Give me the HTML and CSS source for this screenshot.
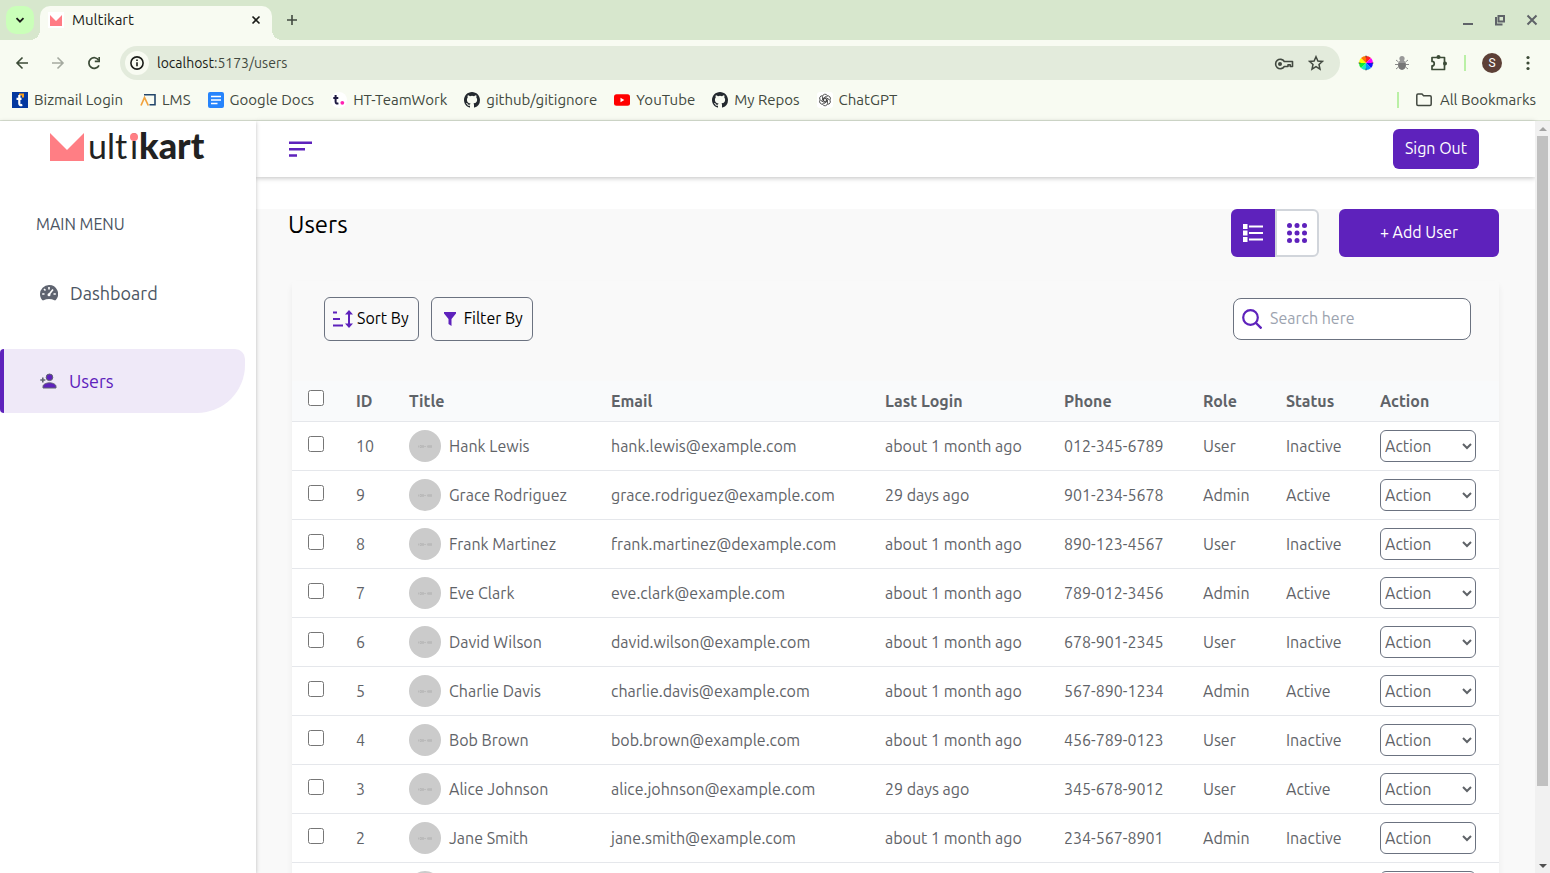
FILE: index.html
```html
<!DOCTYPE html>
<html lang="en">
<head>
<meta charset="utf-8">
<title>Multikart</title>
<link rel="stylesheet" href="styles.css">
</head>
<body>
<svg class="defs" aria-hidden="true">
  <symbol id="github" viewBox="0 0 16 16"><path fill="#24292f" d="M8 0C3.58 0 0 3.58 0 8c0 3.54 2.29 6.53 5.47 7.59.4.07.55-.17.55-.38 0-.19-.01-.82-.01-1.49-2.01.37-2.53-.49-2.69-.94-.09-.23-.48-.94-.82-1.13-.28-.15-.68-.52-.01-.53.63-.01 1.08.58 1.23.82.72 1.21 1.87.87 2.33.66.07-.52.28-.87.51-1.07-1.78-.2-3.64-.89-3.64-3.95 0-.87.31-1.59.82-2.15-.08-.2-.36-1.02.08-2.12 0 0 .67-.21 2.2.82a7.6 7.6 0 0 1 4 0c1.53-1.04 2.2-.82 2.2-.82.44 1.1.16 1.92.08 2.12.51.56.82 1.27.82 2.15 0 3.07-1.87 3.75-3.65 3.95.29.25.54.73.54 1.48 0 1.07-.01 1.93-.01 2.2 0 .21.15.46.55.38A8 8 0 0 0 16 8c0-4.42-3.58-8-8-8z"/></symbol>
  <symbol id="avatar" viewBox="0 0 32 32"><circle cx="16" cy="16" r="16" fill="#cbcbcb"/><path d="M9.500 15.500v2M11 15.500h1.500v2H11zM13.500 15.500h1v2h-1zM15.500 16l1 1M16.500 16l-1 1M18.500 15.500v2M19.500 15.500h1v2h-1zM21.500 15.500h1v2h-1z" fill="none" stroke="#a9a9a9" stroke-width=".5"/></symbol>
</svg>

<div class="browser">
  <div class="tabstrip">
    <button class="tab-search" aria-label="Search tabs"><svg width="12" height="12" viewBox="0 0 12 12"><path d="M2.500 4.200 6 7.700l3.500-3.500" fill="none" stroke="#1a1c18" stroke-width="1.800"/></svg></button>
    <div class="tab">
      <svg width="16" height="16" viewBox="0 0 16 16"><path fill="#fff" d="M0 0h16v16H0z"/><path fill="#ff7b84" d="M2 3l6 6 6-6v11H2z"/></svg>
      <span class="tab-title">Multikart</span>
      <button class="plain" aria-label="Close tab"><svg width="10" height="10" viewBox="0 0 10 10"><path d="M1.500 1.500l7 7m0-7l-7 7" stroke="#1a1c18" stroke-width="1.600"/></svg></button>
    </div>
    <button class="plain new-tab" aria-label="New tab"><svg width="12" height="12" viewBox="0 0 12 12"><path d="M6 1v10M1 6h10" stroke="#424940" stroke-width="1.600"/></svg></button>
    <div class="window-buttons">
      <button class="plain" aria-label="Minimize"><svg width="12" height="12" viewBox="0 0 12 12"><path d="M1 10h10" stroke="#5f6368" stroke-width="2"/></svg></button>
      <button class="plain" aria-label="Restore"><svg width="12" height="12" viewBox="0 0 12 12"><path d="M4.500 2h5.500v5.500H4.500zM2 3v7.500h6.500" fill="none" stroke="#5f6368" stroke-width="2"/></svg></button>
      <button class="plain" aria-label="Close"><svg width="12" height="12" viewBox="0 0 12 12"><path d="M1.500 1.500l9 9m0-9l-9 9" stroke="#5f6368" stroke-width="2"/></svg></button>
    </div>
  </div>
  <div class="toolbar">
    <div class="nav-buttons">
      <button class="plain" aria-label="Back"><svg width="14" height="14" viewBox="0 0 14 14"><path d="M13 7H2m5.500-5.500L2 7l5.500 5.500" fill="none" stroke="#3c4b37" stroke-width="1.600"/></svg></button>
      <button class="plain" aria-label="Forward"><svg width="14" height="14" viewBox="0 0 14 14"><path d="M1 7h11M6.500 1.500 12 7l-5.500 5.500" fill="none" stroke="#a5aaa0" stroke-width="1.600"/></svg></button>
      <button class="plain" aria-label="Reload"><svg width="14" height="14" viewBox="0 0 14 14"><path d="M12 9.300A5.300 5.300 0 1 1 11.700 4.200" fill="none" stroke="#3c4b37" stroke-width="1.700"/><path d="M13 1v5.200H7.800V4.600h3.600V1z" fill="#3c4b37"/></svg></button>
    </div>
    <div class="omnibox">
      <button class="site-info" aria-label="Site information"><svg width="14" height="14" viewBox="0 0 14 14"><circle cx="7" cy="7" r="6.100" fill="none" stroke="#1a1c18" stroke-width="1.600"/><path d="M7 6.200v4M7 3.500v1.600" stroke="#1a1c18" stroke-width="1.600"/></svg></button>
      <span class="url"><b>localhost</b>:5173/users</span>
      <button class="plain" aria-label="Passwords"><svg width="20" height="14" viewBox="0 0 20 14"><path d="M10.300 5.500H18.500v5h-2.300V8.800h-2.200v1.700H10.300A4.700 4.700 0 1 1 10.300 5.500z" fill="none" stroke="#424940" stroke-width="1.600" stroke-linejoin="round"/><circle cx="6" cy="8" r="2" fill="#424940"/></svg></button>
      <button class="plain" aria-label="Bookmark this page"><svg width="16" height="16" viewBox="0 0 16 16"><path d="M8 1.700l1.900 4.300 4.600.4-3.500 3.100 1 4.600L8 11.700l-4 2.400 1-4.600-3.500-3.100L6.100 6z" fill="none" stroke="#424940" stroke-width="1.500"/></svg></button>
    </div>
    <div class="extensions">
      <button class="plain" aria-label="Color picker"><svg width="16" height="16" viewBox="0 0 16 16"><path fill="#f22" d="M8 8V1a7 7 0 0 1 5 2z"/><path fill="#f0f" d="M8 8l5-5a7 7 0 0 1 2 5z"/><path fill="#11f" d="M8 8h7a7 7 0 0 1-2 5z"/><path fill="#09f" d="M8 8l5 5a7 7 0 0 1-5 2z"/><path fill="#1de9c0" d="M8 8v7a7 7 0 0 1-5-2z"/><path fill="#1e3" d="M8 8l-5 5a7 7 0 0 1-2-5z"/><path fill="#ff0" d="M8 8H1a7 7 0 0 1 2-5z"/><path fill="#f70" d="M8 8L3 3a7 7 0 0 1 5-2z"/><path d="M8 .5v2M8 13.500v2M.5 8h2M13.500 8h2" stroke="#444" stroke-width=".8"/></svg></button>
      <button class="plain" aria-label="Debugger"><svg width="16" height="16" viewBox="0 0 16 16"><path d="M4.500 7L2 5M4 9.500H1M4.500 12L2 14M11.500 7L14 5M12 9.500h3M11.500 12l2.500 2" stroke="#8a8a8a"/><ellipse cx="8" cy="10" rx="4" ry="5" fill="#777"/><circle cx="8" cy="3.500" r="2.600" fill="#999"/><path d="M4.500 7h7" stroke="#bbb"/></svg></button>
      <button class="plain" aria-label="Extensions"><svg width="18" height="18" viewBox="0 0 18 18"><path d="M2 3.500h12.500v12H2v-3.600c3 0 3-4.500 0-4.500z" fill="none" stroke="#3c4b37" stroke-width="1.700" stroke-linejoin="round"/><circle cx="8.500" cy="3" r="2" fill="#3c4b37"/><circle cx="15" cy="9.500" r="2" fill="#3c4b37"/></svg></button>
    </div>
    <span class="divider"></span>
    <button class="profile" aria-label="Profile">S</button>
    <button class="plain menu" aria-label="Menu"><svg width="4" height="16" viewBox="0 0 4 16"><g fill="#3c4b37"><circle cx="2" cy="2.500" r="1.600"/><circle cx="2" cy="8" r="1.600"/><circle cx="2" cy="13.500" r="1.600"/></g></svg></button>
  </div>
  <nav class="bookmarks">
    <a href="#"><svg width="16" height="16" viewBox="0 0 16 16"><path fill="#0438a0" d="M0 0h16v16H0z"/><path fill="#f9a11b" d="M7 1.500h5v4h-2v-2H7z"/><path d="M7.300 3v8.500c0 1.600 1 1.900 3 1.400M4.500 6.800h5" fill="none" stroke="#fff" stroke-width="2.200"/></svg>Bizmail Login</a>
    <a href="#"><svg width="16" height="16" viewBox="0 0 16 16"><path d="M4 2.700h11v10H9.500" fill="none" stroke="#23466b" stroke-width="1.600"/><path d="M1 13.500l3.500-8 3.800 8" fill="none" stroke="#f2a23c" stroke-width="1.700"/></svg>LMS</a>
    <a href="#"><svg width="16" height="16" viewBox="0 0 16 16"><rect width="16" height="16" rx="2" fill="#2684fc"/><path d="M3 4.500h10M3 8h10M3 11.500h6.500" stroke="#fff" stroke-width="1.500"/></svg>Google Docs</a>
    <a href="#"><svg width="16" height="16" viewBox="0 0 16 16"><circle cx="8" cy="8" r="8" fill="#fff"/><path d="M4.600 3v6.700c0 1.700 1 2.100 2.800 1.600M2.300 6H7.300" fill="none" stroke="#1c1840" stroke-width="2"/><circle cx="11.300" cy="10.800" r="1.900" fill="#ff22b1"/></svg>HT-TeamWork</a>
    <a href="#"><svg width="16" height="16"><use href="#github"/></svg>github/gitignore</a>
    <a href="#"><svg width="16" height="16" viewBox="0 0 16 16"><rect y="2.300" width="16" height="11.500" rx="2.500" fill="#f00"/><path fill="#fff" d="M6.500 5.800v4.500L10.300 8z"/></svg>YouTube</a>
    <a href="#"><svg width="16" height="16"><use href="#github"/></svg>My Repos</a>
    <a href="#"><svg width="16" height="16" viewBox="0 0 16 16"><rect width="16" height="16" rx="3" fill="#fff"/><g fill="none" stroke="#333" stroke-width=".8"><path id="petal" d="M5.500 8.200V4.600a2.600 2.600 0 0 1 4.900-1M5.500 8.200l2.600 1.500"/><use href="#petal" transform="rotate(60 8 8)"/><use href="#petal" transform="rotate(120 8 8)"/><use href="#petal" transform="rotate(180 8 8)"/><use href="#petal" transform="rotate(240 8 8)"/><use href="#petal" transform="rotate(300 8 8)"/></g></svg>ChatGPT</a>
    <span class="divider bookmarks-divider"></span>
    <a class="all" href="#"><svg width="16" height="14" viewBox="0 0 16 14"><path d="M.8 2.200c0-.7.500-1.200 1.200-1.200h4l1.600 1.700H14c.7 0 1.200.5 1.200 1.200v7.300c0 .7-.5 1.200-1.200 1.200H2c-.7 0-1.200-.5-1.200-1.200z" fill="none" stroke="#424940" stroke-width="1.500"/></svg>All Bookmarks</a>
  </nav>
</div>

<div class="page">
  <aside class="sidebar">
    <a class="logo" href="#" aria-label="Multikart"><svg width="160" height="28" viewBox="0 0 160 28"><path fill="#ff7e84" d="M0 0l17 17L34 0v28H0z"/><text class="logo-light" x="38" y="26">ult</text><text class="logo-light" x="80" y="26">i</text><circle cx="84" cy="4" r="4" fill="#ff7e84"/><text class="logo-heavy" x="89" y="26">kart</text></svg></a>
    <p class="menu-title">MAIN MENU</p>
    <nav class="menu-list">
      <a class="item" href="#"><svg width="18" height="16" viewBox="0 0 18 16"><path fill="#5f6470" d="M9 0a9 9 0 0 0-9 9c0 2.300.8 4.400 2.200 6 .4.400.9.500 1.300.3C7 13.700 11 13.700 14.500 15.300c.4.200.9.100 1.300-.3A9 9 0 0 0 9 0z"/><path d="M9 2v2.500M4 4l1.500 1.500M2.200 9h2.300M13.500 9h2.300M9 9.500l4-5" stroke="#fff" stroke-width="1.600"/><circle cx="9" cy="9.700" r="1.500" fill="#fff"/></svg>Dashboard</a>
      <a class="item active" href="#"><svg width="17" height="16" viewBox="0 0 17 16"><g fill="#5e22bc" stroke="#5f6470" stroke-width="1"><circle cx="9.500" cy="4.300" r="3.300"/><path d="M3 15v-1.500c0-2.500 4-3.700 6.500-3.700s6.500 1.200 6.500 3.700V15z"/></g><path d="M2.800 4.500v5M.3 7h5" stroke="#5f6470" stroke-width="1.600"/></svg>Users</a>
    </nav>
  </aside>
  <div class="content">
    <header class="topbar">
      <button class="plain" aria-label="Toggle menu"><svg width="24" height="16" viewBox="0 0 24 16"><path d="M0 1.800h23M0 8.300h16M0 14.500h8" stroke="#5e22bc" stroke-width="2.400"/></svg></button>
      <button class="primary sign-out">Sign Out</button>
    </header>
    <main class="main">
      <div class="heading">
        <h1>Users</h1>
        <div class="view-toggle">
          <button class="list" aria-label="List view"><svg width="20" height="18" viewBox="0 0 20 18"><path d="M0 0h4.500v5H0zM0 6.500h4.500v5H0zM0 13h4.500v5H0z" fill="#fff"/><path d="M6 2.500h14M6 9h14M6 15.500h14" stroke="#fff" stroke-width="2.200"/></svg></button>
          <button class="grid" aria-label="Grid view"><svg width="20" height="20" viewBox="0 0 20 20"><g fill="#5e22bc"><circle cx="2.500" cy="2.500" r="2.500"/><circle cx="10" cy="2.500" r="2.500"/><circle cx="17.500" cy="2.500" r="2.500"/><circle cx="2.500" cy="10" r="2.500"/><circle cx="10" cy="10" r="2.500"/><circle cx="17.500" cy="10" r="2.500"/><circle cx="2.500" cy="17.500" r="2.500"/><circle cx="10" cy="17.500" r="2.500"/><circle cx="17.500" cy="17.500" r="2.500"/></g></svg></button>
        </div>
        <button class="primary add-user">+ Add User</button>
      </div>
      <section class="card">
        <div class="tools">
          <button class="tool"><svg width="20" height="18" viewBox="0 0 20 18"><path d="M0 2.500h4M0 9h7M0 15.500h10" stroke="#5e22bc" stroke-width="2"/><path d="M16 2v14" stroke="#5e22bc" stroke-width="2"/><path fill="#5e22bc" d="M16 0l4 4.500h-8zM16 18l4-4.500h-8z"/></svg><span>Sort By</span></button>
          <button class="tool filter"><svg width="12" height="14" viewBox="0 0 12 14"><path fill="#5e22bc" d="M0 0h12v1.500L7.500 7v7L4.500 12V7L0 1.500z"/></svg><span>Filter By</span></button>
          <label class="search"><svg width="20" height="20" viewBox="0 0 20 20"><circle cx="8.500" cy="8.500" r="7.300" fill="none" stroke="#5e22bc" stroke-width="2.200"/><path d="M14 14l5.500 5.500" stroke="#5e22bc" stroke-width="2.400"/></svg><input type="text" placeholder="Search here" aria-label="Search users"></label>
        </div>
        <table class="users">
          <colgroup><col class="c-check"><col class="c-id"><col class="c-title"><col class="c-email"><col class="c-login"><col class="c-phone"><col class="c-role"><col class="c-status"><col class="c-action"></colgroup>
          <thead><tr><th><input type="checkbox" aria-label="Select all"></th><th>ID</th><th>Title</th><th>Email</th><th>Last Login</th><th>Phone</th><th>Role</th><th>Status</th><th>Action</th></tr></thead>
          <tbody>
            <tr><td><input type="checkbox" aria-label="Select user 10"></td><td>10</td><td><div class="person"><svg width="32" height="32"><use href="#avatar"/></svg>Hank Lewis</div></td><td>hank.lewis@example.com</td><td>about 1 month ago</td><td>012-345-6789</td><td>User</td><td>Inactive</td><td><select aria-label="Action"><option>Action</option></select></td></tr>
            <tr><td><input type="checkbox" aria-label="Select user 9"></td><td>9</td><td><div class="person"><svg width="32" height="32"><use href="#avatar"/></svg>Grace Rodriguez</div></td><td>grace.rodriguez@example.com</td><td>29 days ago</td><td>901-234-5678</td><td>Admin</td><td>Active</td><td><select aria-label="Action"><option>Action</option></select></td></tr>
            <tr><td><input type="checkbox" aria-label="Select user 8"></td><td>8</td><td><div class="person"><svg width="32" height="32"><use href="#avatar"/></svg>Frank Martinez</div></td><td>frank.martinez@dexample.com</td><td>about 1 month ago</td><td>890-123-4567</td><td>User</td><td>Inactive</td><td><select aria-label="Action"><option>Action</option></select></td></tr>
            <tr><td><input type="checkbox" aria-label="Select user 7"></td><td>7</td><td><div class="person"><svg width="32" height="32"><use href="#avatar"/></svg>Eve Clark</div></td><td>eve.clark@example.com</td><td>about 1 month ago</td><td>789-012-3456</td><td>Admin</td><td>Active</td><td><select aria-label="Action"><option>Action</option></select></td></tr>
            <tr><td><input type="checkbox" aria-label="Select user 6"></td><td>6</td><td><div class="person"><svg width="32" height="32"><use href="#avatar"/></svg>David Wilson</div></td><td>david.wilson@example.com</td><td>about 1 month ago</td><td>678-901-2345</td><td>User</td><td>Inactive</td><td><select aria-label="Action"><option>Action</option></select></td></tr>
            <tr><td><input type="checkbox" aria-label="Select user 5"></td><td>5</td><td><div class="person"><svg width="32" height="32"><use href="#avatar"/></svg>Charlie Davis</div></td><td>charlie.davis@example.com</td><td>about 1 month ago</td><td>567-890-1234</td><td>Admin</td><td>Active</td><td><select aria-label="Action"><option>Action</option></select></td></tr>
            <tr><td><input type="checkbox" aria-label="Select user 4"></td><td>4</td><td><div class="person"><svg width="32" height="32"><use href="#avatar"/></svg>Bob Brown</div></td><td>bob.brown@example.com</td><td>about 1 month ago</td><td>456-789-0123</td><td>User</td><td>Inactive</td><td><select aria-label="Action"><option>Action</option></select></td></tr>
            <tr><td><input type="checkbox" aria-label="Select user 3"></td><td>3</td><td><div class="person"><svg width="32" height="32"><use href="#avatar"/></svg>Alice Johnson</div></td><td>alice.johnson@example.com</td><td>29 days ago</td><td>345-678-9012</td><td>User</td><td>Active</td><td><select aria-label="Action"><option>Action</option></select></td></tr>
            <tr><td><input type="checkbox" aria-label="Select user 2"></td><td>2</td><td><div class="person"><svg width="32" height="32"><use href="#avatar"/></svg>Jane Smith</div></td><td>jane.smith@example.com</td><td>about 1 month ago</td><td>234-567-8901</td><td>Admin</td><td>Inactive</td><td><select aria-label="Action"><option>Action</option></select></td></tr>
            <tr><td></td><td></td><td><div class="person"><svg width="32" height="32"><use href="#avatar"/></svg></div></td><td></td><td></td><td></td><td></td><td></td><td><select aria-label="Action"></select></td></tr>
          </tbody>
        </table>
      </section>
    </main>
  </div>
  <div class="scrollbar" aria-hidden="true">
    <svg width="15" height="15" viewBox="0 0 15 15"><path fill="#a3a3a3" d="M4 10h8L8 6z"/></svg>
    <div class="track"><div class="thumb"></div></div>
    <svg width="15" height="15" viewBox="0 0 15 15"><path fill="#505050" d="M4 6h8l-4 4z"/></svg>
  </div>
</div>
</body>
</html>
```
FILE: styles.css
```css
* { box-sizing: border-box; }

body {
  margin: 0;
  height: 100vh;
  display: flex;
  flex-direction: column;
  overflow: hidden;
  background: #fff;
  font-family: Ubuntu, "Noto Sans", sans-serif;
  font-size: 16px;
  line-height: 24px;
  color: #000;
}

button, input, select { font: inherit; color: inherit; }
button { border: 0; padding: 0; cursor: pointer; }
a { color: inherit; text-decoration: none; }
svg { display: block; flex: none; }
.defs { position: absolute; width: 0; height: 0; }
.plain { display: flex; align-items: center; justify-content: center; background: none; }

/* Browser frame */
.browser {
  flex: none;
  background: #f8fbf2;
  border-bottom: 1px solid #dbe3d4;
  font-size: 15px;
  line-height: 20px;
  color: #424940;
}
.tabstrip { display: flex; height: 40px; padding-left: 6px; background: #d7e7cd; }
.tab-search {
  display: flex;
  align-items: center;
  justify-content: center;
  width: 28px;
  height: 28px;
  margin-top: 6px;
  border-radius: 10px;
  background: #caffb9;
}
.tab {
  display: flex;
  align-items: center;
  gap: 8px;
  width: 232px;
  margin: 6px 0 0 6px;
  padding: 0 11px 6px 8px;
  border-radius: 10px 10px 0 0;
  background: #f8fbf2;
  color: #1a1c18;
  position: relative;
}
.tab::before, .tab::after {
  content: "";
  position: absolute;
  bottom: 0;
  width: 10px;
  height: 10px;
}
.tab::before { left: -10px; background: radial-gradient(circle at 0 0, transparent 10px, #f8fbf2 10px); }
.tab::after { right: -10px; background: radial-gradient(circle at 100% 0, transparent 10px, #f8fbf2 10px); }
.tab-title { flex: 1; }
.new-tab { width: 40px; }
.window-buttons { display: flex; gap: 20px; margin-left: auto; padding-right: 12px; }
.toolbar { display: flex; align-items: center; height: 40px; padding: 6px 20px 0 15px; }
.nav-buttons { display: flex; gap: 22px; margin-right: 19px; }
.omnibox {
  flex: 1;
  display: flex;
  align-items: center;
  gap: 14px;
  height: 34px;
  padding: 0 16px 0 5px;
  border-radius: 17px;
  background: #e3ebdc;
}
.site-info {
  display: flex;
  align-items: center;
  justify-content: center;
  width: 24px;
  height: 24px;
  border-radius: 12px;
  background: #f8fbf2;
}
.url { flex: 1; margin-left: -6px; font-size: 14px; }
.url b { font-weight: 400; color: #1a1c18; }
.extensions { display: flex; align-items: center; gap: 20px; margin: 0 16px 0 18px; }
.divider { width: 2px; height: 16px; background: #baf0a6; }
.profile {
  width: 20px;
  height: 20px;
  margin: 0 24px 0 16px;
  border-radius: 10px;
  background: #5d4037;
  color: #fff;
  font: 12px/20px Roboto, sans-serif;
}
.bookmarks { display: flex; align-items: center; gap: 17px; height: 40px; padding: 0 14px 0 12px; }
.bookmarks a { display: flex; align-items: center; gap: 6px; white-space: nowrap; }
.bookmarks .all { gap: 8px; }
.bookmarks-divider { margin-left: auto; }

/* Page shell */
.page { flex: 1; display: flex; min-height: 0; }
.sidebar {
  flex: none;
  width: 256px;
  box-shadow: 0 1px 4px rgba(0, 0, 0, .25);
  z-index: 1;
  background: #fff;
}
.logo { display: flex; align-items: center; height: 52px; padding-left: 50px; }
.logo svg { overflow: visible; fill: #222; }
.logo-light { font: 34px Lato, sans-serif; }
.logo-heavy { font: 900 36px Lato, sans-serif; }
.menu-title { margin: 39px 0 0 36px; color: #4b5563; }
.menu-list { margin-top: 25px; color: #4b5563; font-size: 18px; }
.item { display: flex; align-items: center; gap: 12px; height: 64px; margin: 0 11px 24px 0; padding-left: 40px; }
.active {
  padding-left: 36px;
  border-left: 4px solid #5e22bc;
  border-radius: 4px 10px 48px 4px;
  background: #efe9f8;
  color: #5e22bc;
}
.content { flex: 1; display: flex; flex-direction: column; min-width: 0; }
.topbar {
  flex: none;
  display: flex;
  align-items: center;
  justify-content: space-between;
  height: 56px;
  margin-bottom: 32px;
  padding: 0 56px 0 33px;
  box-shadow: 0 1px 5px rgba(0, 0, 0, .25);
}
.primary { padding-bottom: 2px; border-radius: 6px; background: #5e22bc; color: #fff; }
.sign-out { height: 40px; padding: 0 12px 2px; }
.main { flex: 1; min-height: 0; padding: 0 36px 0 32px; background: #f9f9f9; }
.heading { display: flex; height: 48px; }
h1 { flex: 1; margin: 0; font-size: 24px; line-height: 32px; font-weight: 400; }
.view-toggle { display: flex; margin-right: 20px; }
.view-toggle button { display: flex; align-items: center; justify-content: center; width: 44px; }
.list { border-radius: 6px 0 0 6px; background: #5e22bc; }
.grid { border: 2px solid #d1d5db; border-radius: 0 6px 6px 0; background: #fff; }
.add-user { width: 160px; }

/* Users card */
.card { margin: 24px 0 0 4px; border-radius: 4px; box-shadow: 0 4px 6px rgba(0, 0, 0, .06); }
.tools { display: flex; align-items: center; gap: 12px; height: 100px; padding: 0 28px 24px 32px; }
.tool {
  display: flex;
  align-items: center;
  gap: 4px;
  height: 44px;
  padding: 0 9px 0 8px;
  border: 1px solid #6b7280;
  border-radius: 6px;
  background: transparent;
}
.tool span, .search input { padding: 0 0 2px; }
.filter { gap: 8px; padding-left: 12px; }
.search {
  display: flex;
  align-items: center;
  gap: 8px;
  width: 238px;
  height: 42px;
  margin-left: auto;
  padding: 0 8px;
  border: 1px solid #6b7280;
  border-radius: 8px;
  background: #fff;
}
.search input { flex: 1; min-width: 0; border: 0; outline: 0; background: none; }
.search input::placeholder { color: #9ca3af; }
.users { width: 100%; table-layout: fixed; border-collapse: separate; border-spacing: 0; background: #fff; color: #5f6368; }
.c-check { width: 48px; }
.c-id { width: 53px; }
.c-title { width: 202px; }
.c-email { width: 274px; }
.c-login { width: 179px; }
.c-phone { width: 139px; }
.c-role { width: 83px; }
.c-status { width: 94px; }
.c-action { width: 135px; }
th, td { padding: 0 0 0 16px; border-bottom: 1px solid #e5e7eb; text-align: left; white-space: nowrap; }
th { height: 41px; background: #f9fafb; font-weight: 700; }
td { height: 49px; }
.users input { display: block; width: 16px; height: 16px; margin: 0 0 4px; }
.users th input { margin-bottom: 6px; }
.person { display: flex; align-items: center; gap: 8px; }
.users select {
  display: block;
  width: 96px;
  height: 32px;
  padding: 0;
  border: 1px solid #6b7280;
  border-radius: 6px;
  background: #fff;
}

/* Scrollbar */
.scrollbar { flex: none; display: flex; flex-direction: column; width: 15px; background: #f1f1f1; }
.track { flex: 1; padding: 0 2px; }
.thumb { height: 90%; background: #c1c1c1; }
```
